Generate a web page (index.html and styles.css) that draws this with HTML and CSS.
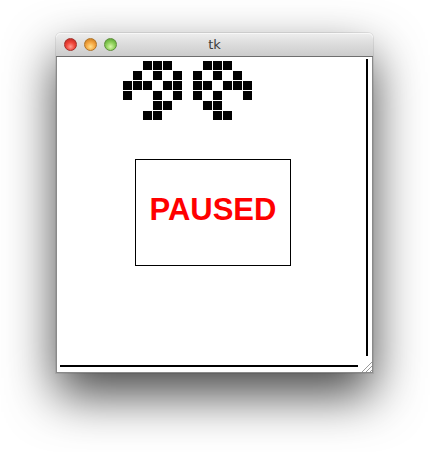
FILE: index.html
```html
<!DOCTYPE html>
<html>
<head>
<meta charset="utf-8">
<title>tk</title>
<link rel="stylesheet" href="styles.css">
</head>
<body>
<div class="window">
  <div class="titlebar">
    <div class="lights">
      <span class="light red"></span>
      <span class="light yellow"></span>
      <span class="light green"></span>
    </div>
    <div class="title">tk</div>
  </div>
  <div class="content">
    <div class="main">
      <div class="digits">
        <div class="digit">
          <i></i><i></i><i class="on"></i><i class="on"></i><i class="on"></i><i></i>
          <i></i><i class="on"></i><i></i><i class="on"></i><i></i><i class="on"></i>
          <i class="on"></i><i class="on"></i><i class="on"></i><i></i><i class="on"></i><i class="on"></i>
          <i class="on"></i><i></i><i></i><i class="on"></i><i></i><i class="on"></i>
          <i></i><i></i><i></i><i class="on"></i><i class="on"></i><i></i>
          <i></i><i></i><i class="on"></i><i class="on"></i><i></i><i></i>
        </div>
        <div class="digit">
          <i></i><i class="on"></i><i class="on"></i><i class="on"></i><i></i><i></i>
          <i class="on"></i><i></i><i class="on"></i><i></i><i class="on"></i><i></i>
          <i class="on"></i><i class="on"></i><i></i><i class="on"></i><i class="on"></i><i class="on"></i>
          <i class="on"></i><i></i><i class="on"></i><i></i><i></i><i class="on"></i>
          <i></i><i class="on"></i><i class="on"></i><i></i><i></i><i></i>
          <i></i><i></i><i class="on"></i><i class="on"></i><i></i><i></i>
        </div>
      </div>
      <div class="paused-box">
        <span class="paused">PAUSED</span>
      </div>
    </div>
    <div class="vline"></div>
    <div class="hline"></div>
    <svg class="grip" width="11" height="11" viewBox="0 0 11 11">
      <line x1="1" y1="11" x2="11" y2="1" stroke="#9a9a9a" stroke-width="1"/>
      <line x1="5" y1="11" x2="11" y2="5" stroke="#9a9a9a" stroke-width="1"/>
      <line x1="9" y1="11" x2="11" y2="9" stroke="#9a9a9a" stroke-width="1"/>
    </svg>
  </div>
</div>
</body>
</html>
```
FILE: styles.css
```css
html, body {
  margin: 0;
  padding: 0;
  background: #ffffff;
}

body {
  width: 430px;
  height: 452px;
  overflow: hidden;
  font-family: "DejaVu Sans", "Liberation Sans", sans-serif;
}

.window {
  width: 317px;
  margin: 33px 0 0 56px;
  border-radius: 5px 5px 0 0;
  box-shadow: 0 22px 50px rgba(0, 0, 0, 0.72), 0 0 0 1px rgba(0, 0, 0, 0.08);
  background: #ffffff;
}

.titlebar {
  height: 23px;
  border-bottom: 1px solid #6e6e6e;
  border-radius: 5px 5px 0 0;
  background: linear-gradient(to bottom, #eeeeee 0%, #dddddd 45%, #cccccc 100%);
  display: flex;
  align-items: center;
  position: relative;
  box-shadow: inset 0 1px 0 #f7f7f7;
}

.lights {
  display: flex;
  gap: 7px;
  padding-left: 8px;
  position: relative;
  z-index: 1;
}

.light {
  width: 13px;
  height: 13px;
  border-radius: 50%;
  box-sizing: border-box;
}

.light.red {
  background: radial-gradient(circle at 50% 70%, #ff9a8f 0%, #f0453a 45%, #b81f1a 100%);
  border: 1px solid #a3302a;
}

.light.yellow {
  background: radial-gradient(circle at 50% 70%, #ffe08a 0%, #f5a742 45%, #c27314 100%);
  border: 1px solid #b07427;
}

.light.green {
  background: radial-gradient(circle at 50% 70%, #d7f7a8 0%, #8fd05a 45%, #4c9a27 100%);
  border: 1px solid #5f8f3b;
}

.title {
  position: absolute;
  left: 0;
  right: 0;
  text-align: center;
  font-size: 13px;
  color: #3c3c3c;
}

.content {
  position: relative;
  border: 1px solid #8a8a8a;
  border-top: none;
  display: grid;
  grid-template-columns: 306px 2px;
  grid-template-rows: 306px 2px;
  padding: 2px 0 0 3px;
  box-sizing: border-box;
  height: 316px;
}

.main {
  grid-column: 1;
  grid-row: 1;
  padding: 2px 0 0 63px;
}

.digits {
  display: flex;
  gap: 11px;
}

.digit {
  display: grid;
  grid-template-columns: repeat(6, 9px);
  grid-template-rows: repeat(6, 9px);
  gap: 1px;
}

.digit i {
  display: block;
}

.digit i.on {
  background: #000000;
}

.paused-box {
  width: 156px;
  height: 107px;
  margin: 39px 0 0 12px;
  border: 1px solid #000000;
  box-sizing: border-box;
  display: flex;
  align-items: center;
  justify-content: center;
  padding-bottom: 6px;
}

.paused {
  font-family: "Liberation Sans", Arial, sans-serif;
  font-weight: bold;
  font-size: 31px;
  color: #ff0000;
}

.vline {
  grid-column: 2;
  grid-row: 1;
  width: 2px;
  height: 297px;
  background: #000000;
}

.hline {
  grid-column: 1;
  grid-row: 2;
  width: 298px;
  height: 2px;
  background: #000000;
}

.grip {
  position: absolute;
  right: 0;
  bottom: 0;
}
```
